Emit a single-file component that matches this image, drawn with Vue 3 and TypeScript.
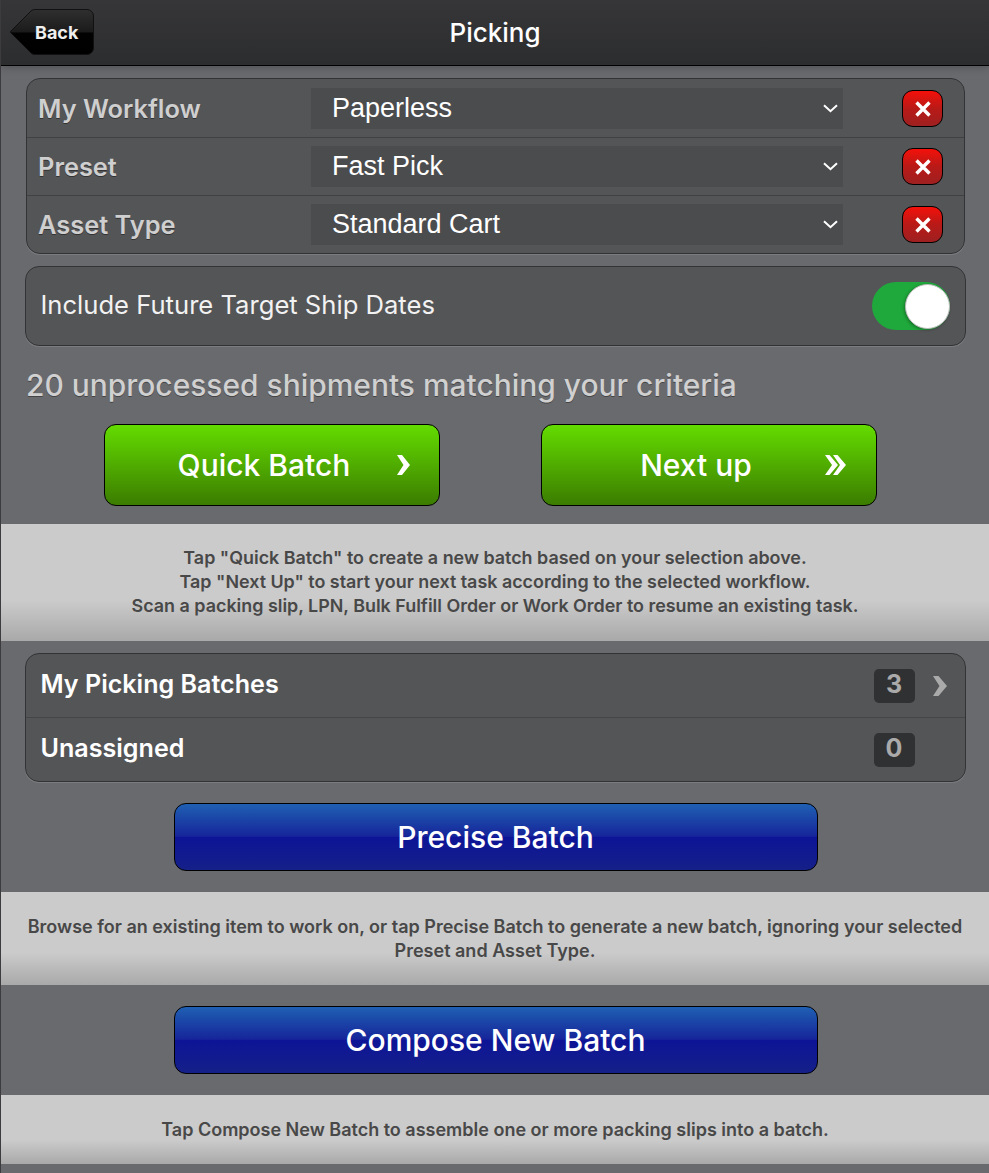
<script setup lang="ts">
const filters = [
  { label: "My Workflow", value: "Paperless" },
  { label: "Preset", value: "Fast Pick" },
  { label: "Asset Type", value: "Standard Cart" },
];
</script>

<template>
  <div class="page">
    <header class="bar">
      <a class="back">
        <svg class="back-shape" width="87" height="49" viewBox="0 0 87 49">
          <defs>
            <linearGradient id="backFill" x1="0" y1="0" x2="0" y2="1">
              <stop offset="0" stop-color="#2f2f30" />
              <stop offset="0.5" stop-color="#1b1b1c" />
              <stop offset="0.52" stop-color="#020202" />
              <stop offset="1" stop-color="#000" />
            </linearGradient>
          </defs>
          <path
            d="M1 24 22 3a6 6 0 0 1 4-1.500h52a6.500 6.500 0 0 1 6.500 6.500v32a6.500 6.500 0 0 1-6.500 6.500H26a6 6 0 0 1-4-1.500z"
            fill="url(#backFill)"
            stroke="#111"
          />
        </svg>
        <span class="back-text">Back</span>
      </a>
      <h1>Picking</h1>
    </header>

    <main class="content">
      <section class="group filters">
        <div v-for="f in filters" :key="f.label" class="filter-row">
          <label>{{ f.label }}</label>
          <div class="select">
            <span>{{ f.value }}</span>
            <svg width="15" height="9" viewBox="0 0 15 9"><path d="M1 1.200 7.500 7.200 14 1.200" fill="none" stroke="#fff" stroke-width="2" /></svg>
          </div>
          <button class="clear">
            <svg width="18" height="18" viewBox="0 0 18 18"><path d="M2.500 2.500l13 13M15.500 2.500l-13 13" stroke="#fff" stroke-width="3.400" /></svg>
          </button>
        </div>
      </section>

      <section class="group toggle-row">
        <span class="toggle-label">Include Future Target Ship Dates</span>
        <div class="toggle"><div class="knob"></div></div>
      </section>

      <p class="count">20 unprocessed shipments matching your criteria</p>

      <div class="actions">
        <button class="btn green">
          <span class="btn-label">Quick Batch</span>
          <svg class="chev" width="13" height="20" viewBox="0 0 13 20"><path d="M0 0h5l8 10-8 10H0l6.500-10z" fill="#fff" /></svg>
        </button>
        <button class="btn green">
          <span class="btn-label">Next up</span>
          <svg class="chev" width="21" height="20" viewBox="0 0 21 20"><path d="M0 0h4.500L13 10 4.500 20H0L7 10zM8 0h4.500L21 10l-8.500 10H8l7-10z" fill="#fff" /></svg>
        </button>
      </div>

      <div class="info first">
        Tap "Quick Batch" to create a new batch based on your selection above.<br />
        Tap "Next Up" to start your next task according to the selected workflow.<br />
        Scan a packing slip, LPN, Bulk Fulfill Order or Work Order to resume an existing task.
      </div>

      <section class="group list">
        <div class="list-row">
          <span class="list-label">My Picking Batches</span>
          <span class="badge">3</span>
          <svg class="list-chev" width="14" height="20" viewBox="0 0 14 20"><path d="M0 0h5.500L14 10 5.500 20H0l6.500-10z" fill="#aaa" /></svg>
        </div>
        <div class="list-row">
          <span class="list-label">Unassigned</span>
          <span class="badge">0</span>
          <span class="list-chev"></span>
        </div>
      </section>

      <button class="btn blue">Precise Batch</button>
      <div class="info second">
        Browse for an existing item to work on, or tap Precise Batch to generate a new batch, ignoring your selected Preset and Asset Type.
      </div>

      <button class="btn blue">Compose New Batch</button>
      <div class="info third">Tap Compose New Batch to assemble one or more packing slips into a batch.</div>
    </main>
  </div>
</template>

<style>
html,
body {
  margin: 0;
  background: #696a6e;
  overflow: hidden;
}
</style>

<style scoped>
.page {
  width: 989px;
  height: 1173px;
  box-sizing: border-box;
  border-left: 1px solid #3c3c3e;
  background: #696a6e;
  font-family: Inter, "Liberation Sans", sans-serif;
  overflow: hidden;
}
.bar {
  position: relative;
  height: 66px;
  box-sizing: border-box;
  border-bottom: 1px solid #000;
  background: linear-gradient(#363638, #2c2d2f);
  display: flex;
  align-items: center;
  justify-content: center;
  box-shadow: 0 1px 8px rgba(0, 0, 0, 0.25);
}
.bar h1 {
  margin: 0;
  color: #fff;
  font-size: 26px;
  font-weight: 500;
  line-height: 1;
}
.back {
  position: absolute;
  left: 8px;
  top: 8px;
  width: 87px;
  height: 49px;
  display: flex;
  align-items: center;
  padding-left: 26px;
  box-sizing: border-box;
  color: #eee;
  font-size: 18px;
  font-weight: 700;
}
.back-shape {
  position: absolute;
  left: 0;
  top: 0;
}
.back-text {
  position: relative;
}
.content {
  display: flex;
  flex-direction: column;
  align-items: center;
  padding-top: 12px;
}
.group {
  box-sizing: border-box;
  background: #545557;
  border: 1px solid #333335;
  border-radius: 14px;
  box-shadow: 0 1px 0 rgba(255, 255, 255, 0.12);
}
.filters {
  width: 939px;
  margin-left: 1px;
  height: 176px;
  padding-top: 1px;
}
.filter-row {
  height: 58px;
  box-sizing: border-box;
  display: flex;
  align-items: center;
  padding-left: 11px;
  border-bottom: 1px solid #404143;
}
.filter-row:last-child {
  border-bottom: 0;
  height: 57px;
}
.filter-row label {
  width: 273px;
  color: #cfcfcf;
  font-size: 25.400px;
  font-weight: 600;
  text-shadow: 0 1px 0 #333;
}
.select {
  width: 532px;
  height: 41px;
  box-sizing: border-box;
  padding: 0 5px 0 21px;
  background: #4b4c4e;
  display: flex;
  align-items: center;
  justify-content: space-between;
  color: #fff;
  font-family: "Liberation Sans", Arial, sans-serif;
  font-size: 27px;
}
.clear {
  margin-left: 59px;
  width: 41px;
  height: 37px;
  padding: 0;
  border: 1px solid #000;
  border-radius: 11px;
  background: linear-gradient(#f5100a, #b81a17 50%, #9e2020);
  display: flex;
  align-items: center;
  justify-content: center;
}
.toggle-row {
  width: 941px;
  height: 80px;
  margin-top: 12px;
  padding: 0 15px;
  display: flex;
  align-items: center;
  justify-content: space-between;
  color: #f2f2f2;
  font-size: 25.6px;
  font-weight: 400;
}
.toggle-label {
  padding-bottom: 3px;
}
.toggle {
  width: 78px;
  height: 48px;
  border-radius: 24px;
  background: #1fa83b;
  position: relative;
}
.knob {
  position: absolute;
  right: 0;
  top: 2px;
  width: 45px;
  height: 45px;
  box-sizing: border-box;
  border-radius: 50%;
  background: #fff;
  border: 1px solid #bbb;
  box-shadow: -1px 1px 3px rgba(0, 0, 0, 0.3);
}
.count {
  align-self: flex-start;
  margin: 21px 0 0 25px;
  color: #d0d0d0;
  font-size: 29.950px;
  line-height: 36px;
  font-weight: 500;
  text-shadow: 0 1px 0 #444;
}
.actions {
  display: flex;
  gap: 101px;
  margin-top: 21px;
  margin-right: 9px;
}
.btn {
  box-sizing: border-box;
  border: 1px solid #000;
  color: #fff;
  font-family: inherit;
  font-weight: 500;
  padding: 0;
}
.green {
  position: relative;
  width: 336px;
  height: 82px;
  border-radius: 12px;
  background: linear-gradient(#63dc00, #3b7c00);
  font-size: 30px;
  display: flex;
  align-items: center;
}
.btn-label {
  position: absolute;
  left: 0;
  width: 318px;
  text-align: center;
}
.green:last-child .btn-label {
  width: 308px;
}
.chev {
  position: absolute;
  right: 29px;
  top: 30px;
}
.green:last-child .chev {
  right: 30px;
}
.info {
  width: 988px;
  box-sizing: border-box;
  background: linear-gradient(#cbcbcb, #cbcbcb 65%, #a9a9a9);
  color: #484848;
  font-size: 18px;
  font-weight: 600;
  line-height: 24px;
  text-align: center;
  padding: 22px 22px 0;
}
.first {
  margin-top: 18px;
  height: 117px;
  font-size: 17.900px;
}
.second {
  margin-top: 21px;
  height: 93px;
  padding-top: 23px;
}
.third {
  margin-top: 21px;
  height: 69px;
  padding-top: 23px;
}
.list {
  width: 941px;
  margin-top: 12px;
  height: 129px;
}
.list-row {
  height: 64px;
  box-sizing: border-box;
  display: flex;
  align-items: center;
  padding: 0 18px 0 15px;
  color: #fff;
  font-size: 25.100px;
  font-weight: 600;
  border-bottom: 1px solid #444547;
}
.list-row:last-child {
  border-bottom: 0;
  height: 63px;
}
.list-label {
  flex: 1;
  padding-bottom: 3px;
}
.badge {
  width: 41px;
  height: 34px;
  border-radius: 5px;
  background: #303133;
  color: #aaa;
  font-size: 25px;
  font-weight: 700;
  text-align: center;
  line-height: 31px;
}
.list-chev {
  width: 14px;
  margin-left: 18px;
}
.blue {
  width: 644px;
  height: 68px;
  border-radius: 12px;
  margin-top: 21px;
  margin-left: 1px;
  background: linear-gradient(#1f60b3, #16259a 49%, #0d1497 50%, #152088);
  font-size: 30px;
}
</style>
